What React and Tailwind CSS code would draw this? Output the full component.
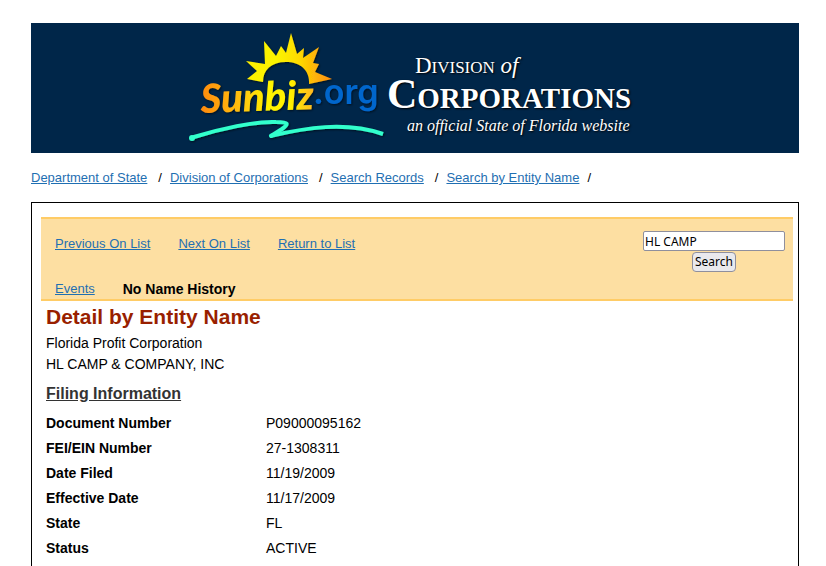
import React from 'react';

const crumbs = ['Department of State', 'Division of Corporations', 'Search Records', 'Search by Entity Name'];

const filing = [
  ['Document Number', 'P09000095162'],
  ['FEI/EIN Number', '27-1308311'],
  ['Date Filed', '11/19/2009'],
  ['Effective Date', '11/17/2009'],
  ['State', 'FL'],
  ['Status', 'ACTIVE'],
];

const linkClass = 'text-[#1f6fb2] underline';

function Logo() {
  return (
    <svg width="200" height="130" viewBox="183 23 200 130" className="shrink-0 overflow-visible" role="img" aria-label="Sunbiz.org">
      <defs>
        <linearGradient id="sun" gradientUnits="userSpaceOnUse" x1="246" y1="0" x2="333" y2="0">
          <stop offset="0" stopColor="#fff000" />
          <stop offset="0.35" stopColor="#fbf400" />
          <stop offset="0.6" stopColor="#ffdc00" />
          <stop offset="1" stopColor="#ff8a10" />
        </linearGradient>
        <linearGradient id="word" gradientUnits="userSpaceOnUse" x1="201" y1="0" x2="314" y2="0">
          <stop offset="0" stopColor="#ff8a10" />
          <stop offset="0.35" stopColor="#ffc010" />
          <stop offset="0.6" stopColor="#fff400" />
          <stop offset="0.8" stopColor="#fff000" />
          <stop offset="1" stopColor="#ffb820" />
        </linearGradient>
        <filter id="shade" x="-10%" y="-10%" width="120%" height="130%">
          <feDropShadow dx="1" dy="1" stdDeviation="1" floodColor="#000" floodOpacity="0.6" />
        </filter>
      </defs>
      <g filter="url(#shade)">
        <path
          fill="url(#sun)"
          d="M263 82L247 79L257 71L246 61L265 64L264 41L276 56L281 46L286 53L291 33L297 54L304 48L303 58L319 47L313 63L319 64L315 72L332 79L309 84C310 71 301 62 286 62C271 62 263 70 263 82Z"
        />
        {/* wave under the word mark */}
        <path
          fill="none"
          stroke="#33ffcc"
          strokeWidth="4"
          strokeLinecap="round"
          strokeLinejoin="round"
          d="M194 137C220 129 255 121 276 122C289 122 289 124 282 129L271 136"
        />
        <path
          fill="none"
          stroke="#33ffcc"
          strokeWidth="4"
          d="M270 136C305 128 345 121 383 134"
        />
        <circle cx="192" cy="138" r="3" fill="#33ffcc" />
        <text x="201" y="113" fill="url(#word)" transform="rotate(-2 201 113)" className="font-[Lato,sans-serif] text-[40px] font-black italic">Sunbiz</text>
        <text x="313" y="104" fill="#0066cc" className="font-[Inter,sans-serif] text-[34px] font-semibold">.org</text>
      </g>
    </svg>
  );
}

export default function App() {
  return (
    <div className="mr-[27px] ml-[31px] bg-white pt-[23px] font-['Liberation_Sans',Arial,sans-serif] text-[14px] text-black">
      <header className="flex justify-center bg-[#002649] pr-4">
        <Logo />
        <div className="pt-[30px] pl-1 font-['Liberation_Serif',serif] whitespace-nowrap text-white [text-shadow:1px_1px_2px_#000]">
          <div className="pl-7 text-[23px] leading-[26px]">
            D<span className="text-[17px]">IVISION</span> <i>of</i>
          </div>
          <div className="text-[42px] leading-[26px] font-bold">
            C<span className="text-[29px]">ORPORATIONS</span>
          </div>
          <div className="pl-5 text-[16px] leading-[30px] italic">an official State of Florida website</div>
        </div>
      </header>

      <nav className="flex pt-4 text-[13px] leading-[18px]">
        {crumbs.map((name) => (
          <span key={name} className="group mr-2">
            <a href="#" className={linkClass}>{name}</a>
            <span className="ml-[11px] group-last:ml-2">/</span>
          </span>
        ))}
      </nav>

      <main className="mt-[15px] border border-b-0 border-black pt-[14px] pb-6">
        <div className="mr-[5px] ml-[9px] flex justify-between border-y-2 border-[#ffcc66] bg-[#fddfa2] pr-2 pl-[14px]">
          <div>
            <div className="flex gap-7 pt-4 text-[13px] leading-[18px]">
              <a href="#" className={linkClass}>Previous On List</a>
              <a href="#" className={linkClass}>Next On List</a>
              <a href="#" className={linkClass}>Return to List</a>
            </div>
            <div className="flex gap-7 pt-[27px] pb-px leading-[18px]">
              <a href="#" className={`${linkClass} text-[13px]`}>Events</a>
              <b>No Name History</b>
            </div>
          </div>
          <form className="flex flex-col items-center pt-3 font-['Noto_Sans',sans-serif] text-[12px]" onSubmit={(e) => e.preventDefault()}>
            <input
              type="text"
              aria-label="Entity name"
              defaultValue="HL CAMP"
              className="h-5 w-[142px] rounded-xs border border-[#8f8f9d] bg-white px-px"
            />
            <button type="submit" className="mt-px h-5 w-11 rounded border border-[#8f8f9d] bg-[#e9e9ed] leading-[18px]">
              Search
            </button>
          </form>
        </div>

        <div className="pl-[14px]">
          <h1 className="text-[21px] leading-8 font-bold text-[#991f00]">Detail by Entity Name</h1>
          <p className="leading-[21px]">Florida Profit Corporation</p>
          <p className="leading-[21px]">HL CAMP &amp; COMPANY, INC</p>
          <h2 className="pt-2 pb-[6px] text-[16px] leading-[22px] font-bold text-[#333] underline">Filing Information</h2>
          <dl>
            {filing.map(([label, value]) => (
              <div key={label} className="flex leading-[25px]">
                <dt className="w-[220px] font-bold">{label}</dt>
                <dd>{value}</dd>
              </div>
            ))}
          </dl>
        </div>
      </main>
    </div>
  );
}
